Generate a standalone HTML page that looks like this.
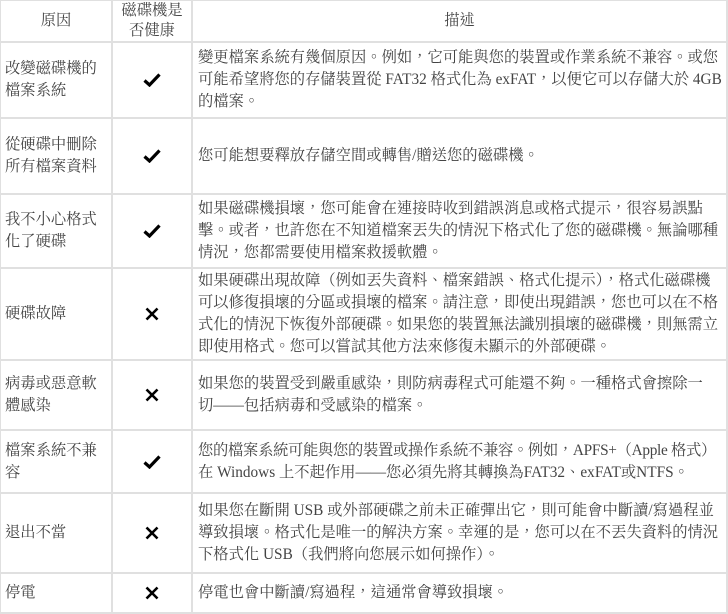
<!DOCTYPE html>
<html><head><meta charset="utf-8"><style>
html,body{margin:0;padding:0;background:#fff;width:728px;height:612px;overflow:hidden}
table{border-collapse:collapse;table-layout:fixed;width:729px;position:absolute;left:-1px;top:-1px;font-family:"Liberation Serif","Noto Serif CJK TC","Noto Serif CJK SC",serif;color:#444;font-size:15.3px;line-height:22px}
td{border:2px solid #e0e0e0;padding:0 4px 0 4px;vertical-align:middle;overflow:hidden}
td.c{text-align:center;padding:0}
td.d{padding-left:5px;padding-right:2px;white-space:nowrap}
svg{display:block;margin:0 auto}
</style></head><body>
<table>
<col style="width:112px"><col style="width:80px"><col>
<tr style="height:41px"><td class="c">原因</td><td class="c" style="line-height:20px">磁碟機是<br>否健康</td><td class="c">描述</td></tr>
<tr style="height:76px"><td>改變磁碟機的<br>檔案系統</td><td class="c"><svg width="18" height="14" viewBox="0 0 18 14"><path d="M1.5 7.5 L6.5 12 L16.5 1.5" fill="none" stroke="#000" stroke-width="3.2"/></svg></td><td class="d">變更檔案系統有幾個原因。例如，它可能與您的裝置或作業系統不兼容。或您<br>可能希望將您的存儲裝置從 FAT32 格式化為 exFAT，以便它可以存儲大於 4GB<br>的檔案。</td></tr>
<tr style="height:76px"><td>從硬碟中刪除<br>所有檔案資料</td><td class="c"><svg width="18" height="14" viewBox="0 0 18 14"><path d="M1.5 7.5 L6.5 12 L16.5 1.5" fill="none" stroke="#000" stroke-width="3.2"/></svg></td><td class="d">您可能想要釋放存儲空間或轉售/贈送您的磁碟機。</td></tr>
<tr style="height:74px"><td>我不小心格式<br>化了硬碟</td><td class="c"><svg width="18" height="14" viewBox="0 0 18 14"><path d="M1.5 7.5 L6.5 12 L16.5 1.5" fill="none" stroke="#000" stroke-width="3.2"/></svg></td><td class="d">如果磁碟機損壞，您可能會在連接時收到錯誤消息或格式提示，很容易誤點<br>擊。或者，也許您在不知道檔案丟失的情況下格式化了您的磁碟機。無論哪種<br>情況，您都需要使用檔案救援軟體。</td></tr>
<tr style="height:92px"><td>硬碟故障</td><td class="c"><svg width="14" height="14" viewBox="0 0 14 14"><path d="M1.5 1.5 L12.5 12.5 M12.5 1.5 L1.5 12.5" stroke="#000" stroke-width="2.6"/></svg></td><td class="d">如果硬碟出現故障（例如丟失資料、檔案錯誤、格式化提示），格式化磁碟機<br>可以修復損壞的分區或損壞的檔案。請注意，即使出現錯誤，您也可以在不格<br>式化的情況下恢復外部硬碟。如果您的裝置無法識別損壞的磁碟機，則無需立<br>即使用格式。您可以嘗試其他方法來修復未顯示的外部硬碟。</td></tr>
<tr style="height:70px"><td>病毒或惡意軟<br>體感染</td><td class="c"><svg width="14" height="14" viewBox="0 0 14 14"><path d="M1.5 1.5 L12.5 12.5 M12.5 1.5 L1.5 12.5" stroke="#000" stroke-width="2.6"/></svg></td><td class="d">如果您的裝置受到嚴重感染，則防病毒程式可能還不夠。一種格式會擦除一<br>切——包括病毒和受感染的檔案。</td></tr>
<tr style="height:63px"><td>檔案系統不兼<br>容</td><td class="c"><svg width="18" height="14" viewBox="0 0 18 14"><path d="M1.5 7.5 L6.5 12 L16.5 1.5" fill="none" stroke="#000" stroke-width="3.2"/></svg></td><td class="d"><span style="letter-spacing:-0.3px">您的檔案系統可能與您的裝置或操作系統不兼容。例如，APFS+（Apple 格式）</span><br>在 Windows 上不起作用——您必須先將其轉換為FAT32、exFAT或NTFS。</td></tr>
<tr style="height:80px"><td>退出不當</td><td class="c"><svg width="14" height="14" viewBox="0 0 14 14"><path d="M1.5 1.5 L12.5 12.5 M12.5 1.5 L1.5 12.5" stroke="#000" stroke-width="2.6"/></svg></td><td class="d">如果您在斷開 USB 或外部硬碟之前未正確彈出它，則可能會中斷讀/寫過程並<br>導致損壞。格式化是唯一的解決方案。幸運的是，您可以在不丟失資料的情況<br>下格式化 USB（我們將向您展示如何操作）。</td></tr>
<tr style="height:40px"><td>停電</td><td class="c"><svg width="14" height="14" viewBox="0 0 14 14"><path d="M1.5 1.5 L12.5 12.5 M12.5 1.5 L1.5 12.5" stroke="#000" stroke-width="2.6"/></svg></td><td class="d">停電也會中斷讀/寫過程，這通常會導致損壞。</td></tr>
</table>
</body></html>
